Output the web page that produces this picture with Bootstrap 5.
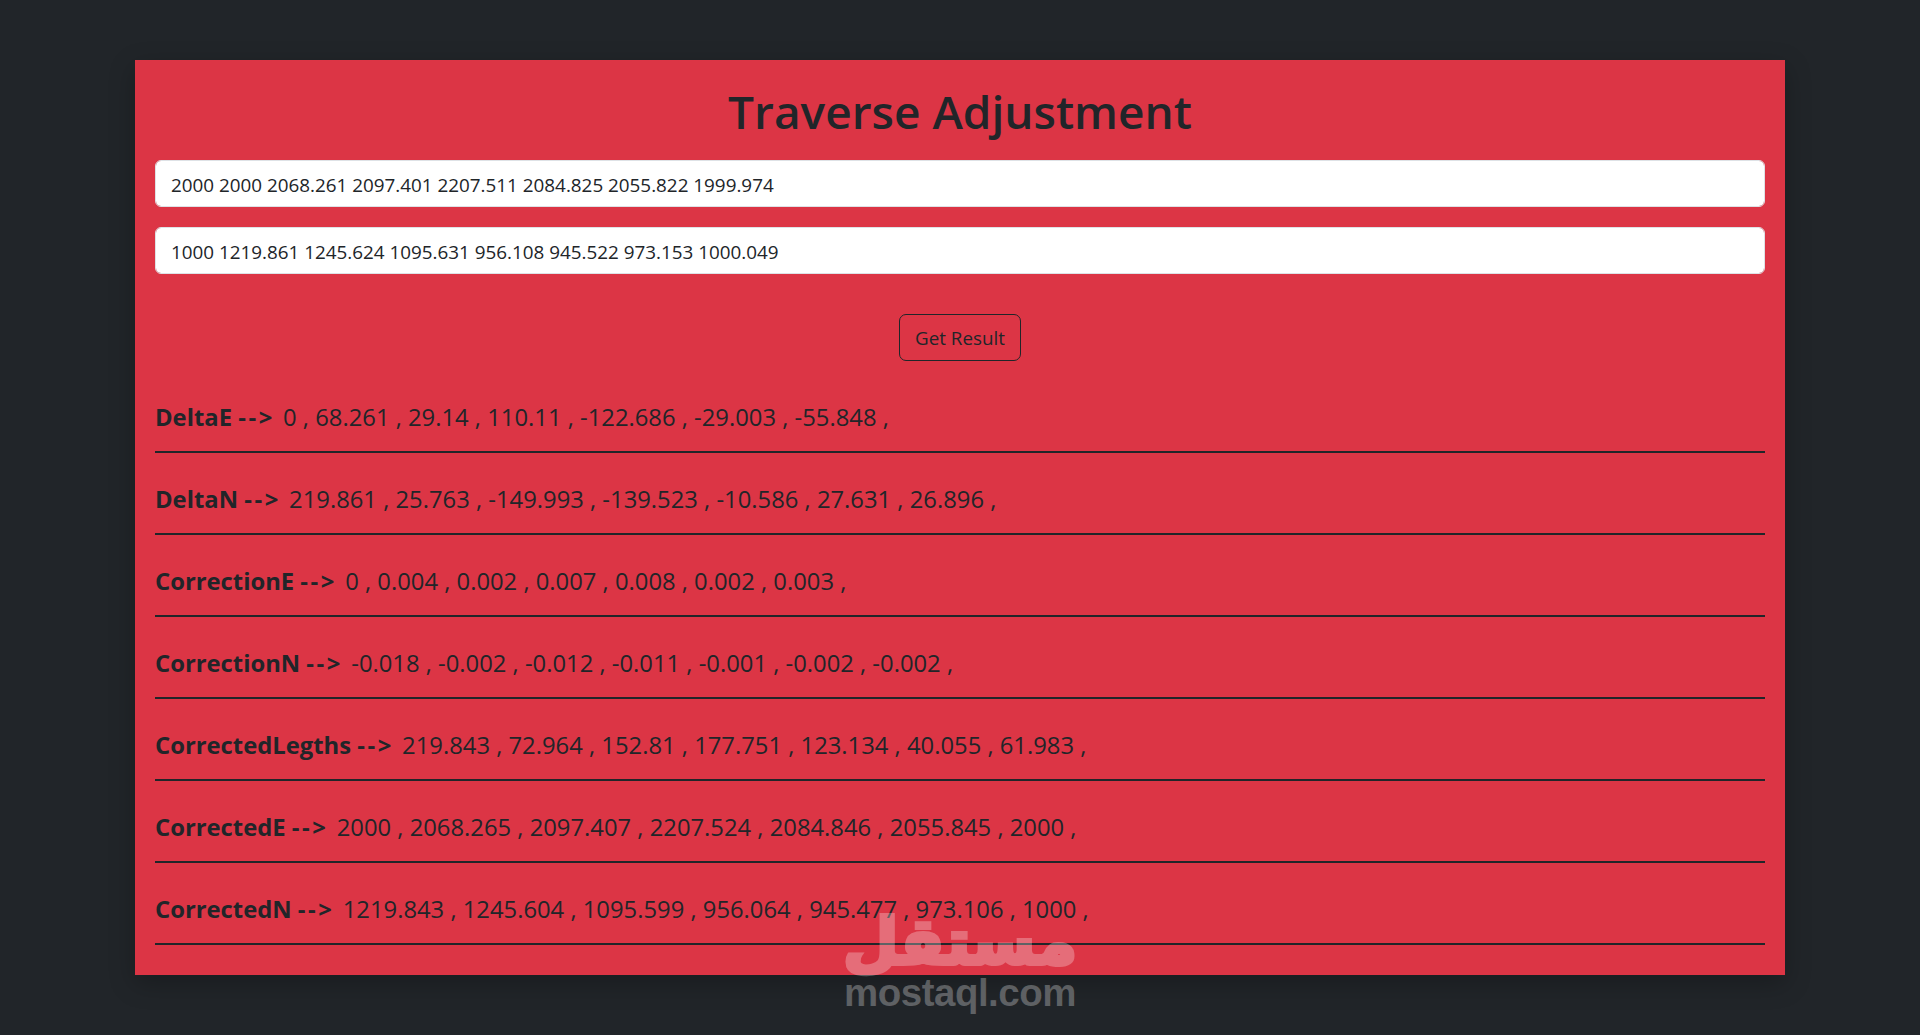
<!doctype html>
<html lang="en">
<head>
<meta charset="utf-8">
<title>Traverse Adjustment</title>
<link href="https://cdn.jsdelivr.net/npm/bootstrap@5.3.0/dist/css/bootstrap.min.css" rel="stylesheet">
<style>
html,body{height:100%}
body{font-family:"Open Sans","Noto Sans",sans-serif;background:#212529;color:#212529;overflow:hidden}
.sheet{width:1650px;height:915px;margin:60px auto 0;padding:20px;box-shadow:0 8px 24px rgba(0,0,0,.25)}
.sheet h1{font-size:46px;line-height:62px;margin:0 0 18px;font-weight:600;text-align:center}
.sheet .form-control{height:46.5px;padding:3px 15px 0;font-size:18.85px;color:#212529;margin-bottom:20.5px;font-family:inherit}
.sheet .go{margin-top:19.5px;height:47px;width:122px;font-size:18.8px;padding:3px 0 0;color:#212529;border-color:#212529;border-radius:7px}
.item{height:82px;border-bottom:2px solid #212529;font-size:23.8px;line-height:36px;padding-top:28px;white-space:nowrap}
.first{margin-top:10px}
.item b{font-weight:700}
.arrow{letter-spacing:2.6px;margin-right:2px}
.mark-ar,.mark-en{position:absolute;left:0;right:0;text-align:center;pointer-events:none}
.mark-ar{top:897px;font:700 64px/90px "DejaVu Sans",sans-serif;color:#fff;-webkit-text-stroke:4px #fff;opacity:.28}
.mark-en{top:973px;font:700 38.5px/40px "Liberation Sans",sans-serif;letter-spacing:-.5px;color:rgba(255,255,255,.28)}
</style>
</head>
<body class="position-relative">
<main class="sheet bg-danger">
  <h1>Traverse Adjustment</h1>
  <input class="form-control" type="text" value="2000 2000 2068.261 2097.401 2207.511 2084.825 2055.822 1999.974">
  <input class="form-control" type="text" value="1000 1219.861 1245.624 1095.631 956.108 945.522 973.153 1000.049">
  <div class="text-center"><button class="btn go" type="button">Get Result</button></div>
  <div class="first">
    <div class="item"><b>DeltaE <span class="arrow">--&gt;</span></b> 0 , 68.261 , 29.14 , 110.11 , -122.686 , -29.003 , -55.848 ,</div>
    <div class="item"><b>DeltaN <span class="arrow">--&gt;</span></b> 219.861 , 25.763 , -149.993 , -139.523 , -10.586 , 27.631 , 26.896 ,</div>
    <div class="item"><b>CorrectionE <span class="arrow">--&gt;</span></b> 0 , 0.004 , 0.002 , 0.007 , 0.008 , 0.002 , 0.003 ,</div>
    <div class="item"><b>CorrectionN <span class="arrow">--&gt;</span></b> -0.018 , -0.002 , -0.012 , -0.011 , -0.001 , -0.002 , -0.002 ,</div>
    <div class="item"><b>CorrectedLegths <span class="arrow">--&gt;</span></b> 219.843 , 72.964 , 152.81 , 177.751 , 123.134 , 40.055 , 61.983 ,</div>
    <div class="item"><b>CorrectedE <span class="arrow">--&gt;</span></b> 2000 , 2068.265 , 2097.407 , 2207.524 , 2084.846 , 2055.845 , 2000 ,</div>
    <div class="item"><b>CorrectedN <span class="arrow">--&gt;</span></b> 1219.843 , 1245.604 , 1095.599 , 956.064 , 945.477 , 973.106 , 1000 ,</div>
  </div>
</main>
<div class="mark-ar" lang="ar" dir="rtl">مستقل</div>
<div class="mark-en">mostaql.com</div>
<script src="https://cdn.jsdelivr.net/npm/bootstrap@5.3.0/dist/js/bootstrap.bundle.min.js"></script>
</body>
</html>
